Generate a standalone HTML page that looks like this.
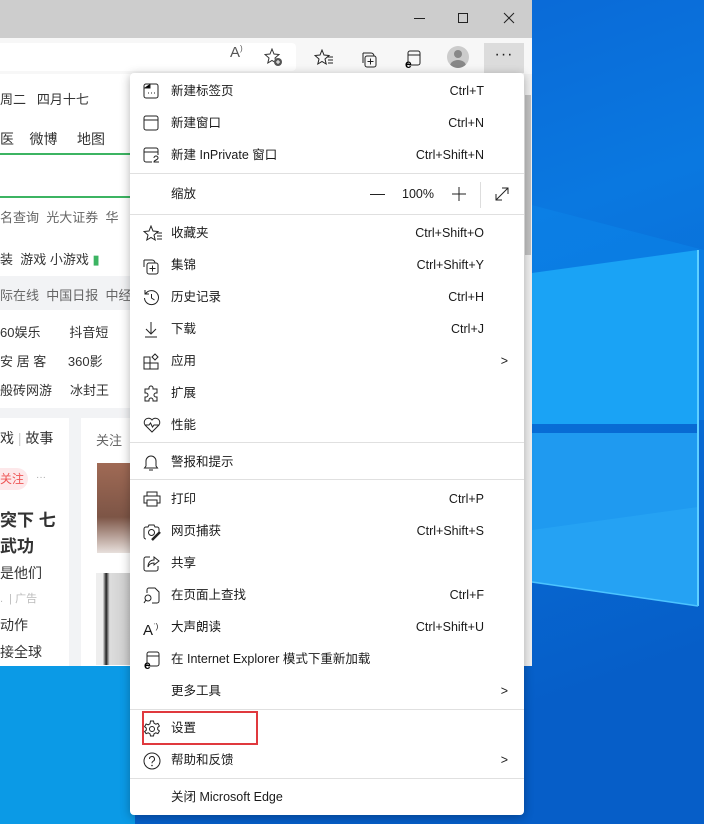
<!DOCTYPE html>
<html><head><meta charset="utf-8"><style>
*{margin:0;padding:0;box-sizing:border-box}
body{width:704px;height:824px;overflow:hidden;position:relative;font-family:"Liberation Sans","Noto Sans CJK SC",sans-serif;font-size:13px;color:#1a1a1a;background:#0a6fd6}
.abs{position:absolute}
.menu{left:130px;top:73px;width:394px;height:742px;background:#fff;border-radius:4px;box-shadow:0 2px 10px rgba(0,0,0,.3)}
.it{position:absolute;left:0;width:394px;height:32px;line-height:32px}
.it .t{position:absolute;left:41px;font-size:12.5px}
.it .k{position:absolute;right:40px;font-size:12.5px}
.it svg{position:absolute;left:13px;top:8px}
.div{position:absolute;left:0;width:394px;height:1px;background:#e0e0e0}
.pg{font-size:13px;color:#333;position:absolute}
</style></head><body>
<!-- desktop -->
<svg class="abs" style="left:0;top:0" width="704" height="824">
<defs>
<linearGradient id="bg" x1="0" y1="0" x2="0.3" y2="1"><stop offset="0" stop-color="#0a5fd0"/><stop offset="0.45" stop-color="#0a78e0"/><stop offset="1" stop-color="#065ec8"/></linearGradient>
</defs>
<rect width="704" height="824" fill="url(#bg)"/>
<polygon points="532,205 704,250 704,420 532,420" fill="#0c86ea" opacity=".5"/>
<polygon points="532,273 698,250 698,424 532,424" fill="#1aa3f5"/>
<polygon points="532,433 698,433 698,606 532,582" fill="#1f9af0"/>
<polygon points="532,530 698,507 698,606 532,582" fill="#2aa8f5" opacity=".6"/>
<line x1="698" y1="250" x2="698" y2="606" stroke="#5fd0ff" stroke-width="2"/>
<line x1="532" y1="582" x2="698" y2="606" stroke="#4cc4ff" stroke-width="1.5"/>
<rect x="0" y="666" width="135" height="158" fill="#0b9ae6"/>
</svg>
<!-- browser -->
<div class="abs" style="left:0;top:0;width:532px;height:666px;background:#fff"></div>
<div class="abs" style="left:0;top:0;width:532px;height:38px;background:#cdcdcd"></div>
<div class="abs" style="left:414px;top:18px;width:11px;height:1px;background:#222"></div>
<div class="abs" style="left:458px;top:13px;width:10px;height:10px;border:1px solid #222"></div>
<svg class="abs" style="left:503px;top:12px" width="12" height="12"><path d="M1 1L11 11M11 1L1 11" stroke="#222" stroke-width="1"/></svg>
<div class="abs" style="left:0;top:38px;width:532px;height:36px;background:#f7f7f7"></div>
<div class="abs" style="left:0;top:43px;width:296px;height:28px;background:#fff;border-radius:0 4px 4px 0"></div>
<div class="abs" style="left:230px;top:44px;font-size:15px;color:#555">A<sup style="font-size:8px">)</sup></div>
<svg class="abs" style="left:264px;top:48px" width="20" height="20"><path d="M8 1l2 5 5 .5-4 3.5 1.2 5L8 12.5 3.8 15 5 10 1 6.5 6 6z" fill="none" stroke="#333"/><circle cx="14" cy="14" r="4" fill="#555"/><path d="M12 14h4M14 12v4" stroke="#fff"/></svg>
<svg class="abs" style="left:314px;top:49px" width="20" height="18"><path d="M8 1l2 5 5 .5-4 3.5 1.2 5L8 12.5 3.8 15 5 10 1 6.5 6 6z" fill="none" stroke="#222"/><path d="M13 8h6M14 11h5M14 14h5" stroke="#222"/></svg>
<svg class="abs" style="left:359px;top:49px" width="20" height="20"><path d="M4 4h8a3 3 0 0 1 3 3" fill="none" stroke="#222"/><rect x="6" y="7" width="11" height="11" rx="2" fill="none" stroke="#222"/><path d="M11.5 9.5v6M8.5 12.5h6" stroke="#222"/><path d="M4 4v10" stroke="#222"/></svg>
<svg class="abs" style="left:403px;top:49px" width="20" height="20"><rect x="5" y="2" width="12" height="14" rx="2" fill="none" stroke="#222"/><path d="M5 6h12" stroke="#222"/><text x="2" y="19" font-size="12" font-weight="bold" font-family="Liberation Sans">e</text></svg>
<div class="abs" style="left:447px;top:46px;width:22px;height:22px;border-radius:50%;background:#ccc;overflow:hidden"><div class="abs" style="left:7px;top:4px;width:8px;height:8px;border-radius:50%;background:#888"></div><div class="abs" style="left:3px;top:14px;width:16px;height:12px;border-radius:50%;background:#888"></div></div>
<div class="abs" style="left:484px;top:43px;width:40px;height:30px;background:#dcdcdc;text-align:center;line-height:24px;font-size:16px;letter-spacing:1px">···</div>
<!-- page bits -->
<div class="pg" style="left:0;top:89px">周二 &nbsp; 四月十七</div>
<div class="pg" style="left:0;top:129px;font-size:14px">医 &nbsp; &nbsp;微博 &nbsp; &nbsp; 地图</div>
<div class="abs" style="left:0;top:153px;width:130px;height:2px;background:#3cb462"></div>
<div class="abs" style="left:0;top:196px;width:130px;height:2px;background:#3cb462"></div>
<div class="pg" style="left:0;top:207px;color:#666">名查询 &nbsp;光大证券 &nbsp;华</div>
<div class="pg" style="left:0;top:249px">装 &nbsp;游戏 小游戏 <span style="color:#3cb462">▮</span></div>
<div class="abs" style="left:0;top:276px;width:130px;height:34px;background:#f2f3f5"></div>
<div class="pg" style="left:0;top:285px;color:#666">际在线 &nbsp;中国日报 &nbsp;中经</div>
<div class="pg" style="left:0;top:322px">60娱乐 &nbsp; &nbsp; &nbsp; &nbsp;抖音短</div>
<div class="pg" style="left:0;top:351px">安 居 客 &nbsp; &nbsp; &nbsp;360影</div>
<div class="pg" style="left:0;top:380px">般砖网游 &nbsp; &nbsp; 冰封王</div>
<div class="abs" style="left:0;top:408px;width:130px;height:10px;background:#f2f3f5"></div>
<div class="abs" style="left:69px;top:418px;width:12px;height:248px;background:#f2f3f5"></div>
<div class="pg" style="left:0;top:428px;font-size:14px">戏 <span style="color:#ccc">|</span> 故事</div>
<div class="pg" style="left:96px;top:430px;color:#666">关注</div>
<div class="abs" style="left:0;top:468px;width:28px;height:22px;background:#fde8ea;border-radius:0 11px 11px 0;color:#e55;font-size:12px;line-height:22px">关注</div>
<div class="pg" style="left:36px;top:472px;color:#aaa;font-size:10px">···</div>
<div class="pg" style="left:0;top:506px;font-size:17px;font-weight:bold">突下 七</div>
<div class="pg" style="left:0;top:532px;font-size:17px;font-weight:bold">武功</div>
<div class="pg" style="left:0;top:563px;font-size:14px">是他们</div>
<div class="pg" style="left:0;top:590px;font-size:11px;color:#bbb">. &nbsp;| 广告</div>
<div class="pg" style="left:0;top:615px;font-size:14px">动作</div>
<div class="pg" style="left:0;top:642px;font-size:14px">接全球</div>
<div class="abs" style="left:97px;top:463px;width:33px;height:90px;background:linear-gradient(#a06a55,#7d5546 60%,#e8e0dc)"></div>
<div class="abs" style="left:96px;top:573px;width:34px;height:92px;background:linear-gradient(90deg,#eee 20%,#222 30%,#ddd 40%,#ccc)"></div>
<div class="abs" style="left:524px;top:74px;width:8px;height:592px;background:#f0f0f0"></div>
<div class="abs" style="left:525px;top:95px;width:6px;height:160px;background:#c2c2c2"></div>
<!-- menu -->
<div class="abs menu">
<div class="it" style="top:2px"><svg width="16" height="16"><rect x="1" y="1" width="14" height="14" rx="2" fill="none" stroke="#222"/><path d="M1 5h6V1M5 10h1M8 10h1M11 10h1" stroke="#222"/></svg><span class="t">新建标签页</span><span class="k">Ctrl+T</span></div>
<div class="it" style="top:34px"><svg width="16" height="16"><rect x="1" y="1" width="14" height="14" rx="2" fill="none" stroke="#222"/><path d="M1 5h14" stroke="#222"/></svg><span class="t">新建窗口</span><span class="k">Ctrl+N</span></div>
<div class="it" style="top:66px"><svg width="18" height="18"><path d="M9 15H3a2 2 0 0 1-2-2V3a2 2 0 0 1 2-2h10a2 2 0 0 1 2 2v5M1 5h14" fill="none" stroke="#222"/><path d="M11 11a2 2 0 1 1 4 0c0 2-4 2-4 4h5" fill="none" stroke="#222"/></svg><span class="t">新建 InPrivate 窗口</span><span class="k">Ctrl+Shift+N</span></div>
<div class="div" style="top:100px"></div>
<div class="it" style="top:105px"><span class="t">缩放</span>
<div class="abs" style="left:240px;top:16px;width:15px;height:1px;background:#222"></div>
<span class="abs" style="left:272px;font-size:12.5px">100%</span>
<svg width="16" height="16" style="left:321px;top:8px"><path d="M8 1v14M1 8h14" stroke="#222"/></svg>
<div class="abs" style="left:350px;top:4px;width:1px;height:26px;background:#ddd"></div>
<svg width="16" height="16" style="left:364px;top:8px"><path d="M2 14L14 2M8 2h6v6M2 8v6h6" fill="none" stroke="#222"/></svg></div>
<div class="div" style="top:141px"></div>
<div class="it" style="top:144px"><svg width="20" height="18"><path d="M8 1l2 5 5 .5-4 3.5 1.2 5L8 12.5 3.8 15 5 10 1 6.5 6 6z" fill="none" stroke="#222"/><path d="M13 8h6M14 11h5M14 14h5" stroke="#222"/></svg><span class="t">收藏夹</span><span class="k">Ctrl+Shift+O</span></div>
<div class="it" style="top:176px"><svg width="18" height="18"><path d="M1 3h8a3 3 0 0 1 3 3" fill="none" stroke="#222"/><path d="M1 3v7" stroke="#222"/><rect x="4" y="6" width="11" height="11" rx="2" fill="none" stroke="#222"/><path d="M9.5 8.5v6M6.5 11.5h6" stroke="#222"/></svg><span class="t">集锦</span><span class="k">Ctrl+Shift+Y</span></div>
<div class="it" style="top:208px"><svg width="18" height="18"><path d="M2.5 5A7 7 0 1 1 1.5 9" fill="none" stroke="#222"/><path d="M2 1v4h4M8.5 5v4l3 2" fill="none" stroke="#222"/></svg><span class="t">历史记录</span><span class="k">Ctrl+H</span></div>
<div class="it" style="top:240px"><svg width="16" height="18"><path d="M8 1v12M3 8l5 5 5-5M2 16h12" fill="none" stroke="#222"/></svg><span class="t">下载</span><span class="k">Ctrl+J</span></div>
<div class="it" style="top:272px"><svg width="18" height="18"><path d="M1 4h6v12H1zM7 10h8v6H7zM1 10h6" fill="none" stroke="#222"/><path d="M12 1l3 3-3 3-3-3z" fill="none" stroke="#222"/></svg><span class="t">应用</span><span class="k" style="right:16px">&gt;</span></div>
<div class="it" style="top:304px"><svg width="18" height="18"><path d="M6 3a2 2 0 0 1 4 0v1h4v4h-1a2 2 0 0 0 0 4h1v4H10v-1a2 2 0 0 0-4 0v1H2v-4h1a2 2 0 0 0 0-4H2V4h4z" fill="none" stroke="#222"/></svg><span class="t">扩展</span></div>
<div class="it" style="top:336px"><svg width="18" height="16"><path d="M9 15L2 8a4 4 0 0 1 7-5 4 4 0 0 1 7 5z" fill="none" stroke="#222"/><path d="M2 8h4l1.5-2 2 4 1.5-2h5" fill="none" stroke="#222"/></svg><span class="t">性能</span></div>
<div class="div" style="top:369px"></div>
<div class="it" style="top:373px"><svg width="16" height="18"><path d="M3 12V7a5 5 0 0 1 10 0v5l1.5 2h-13zM6 16h4" fill="none" stroke="#222"/></svg><span class="t">警报和提示</span></div>
<div class="div" style="top:406px"></div>
<div class="it" style="top:410px"><svg width="18" height="16"><path d="M4 5V1h10v4M4 12H1V5h16v7h-3M4 9h10v6H4z" fill="none" stroke="#222"/></svg><span class="t">打印</span><span class="k">Ctrl+P</span></div>
<div class="it" style="top:442px"><svg width="18" height="18"><path d="M3 16a2 2 0 0 1-2-2V6a2 2 0 0 1 2-2h2l1-2h5l1 2h2a2 2 0 0 1 2 2v3" fill="none" stroke="#222"/><circle cx="8.5" cy="9.5" r="3" fill="none" stroke="#222"/><path d="M9 17l8-8" stroke="#222" stroke-width="2.5"/></svg><span class="t">网页捕获</span><span class="k">Ctrl+Shift+S</span></div>
<div class="it" style="top:474px"><svg width="18" height="18"><path d="M7 2H3a2 2 0 0 0-2 2v10a2 2 0 0 0 2 2h10a2 2 0 0 0 2-2v-3" fill="none" stroke="#222"/><path d="M11 2l5 4-5 4V8c-3 0-5 1-6 4 0-4 2-7 6-7z" fill="none" stroke="#222"/></svg><span class="t">共享</span></div>
<div class="it" style="top:506px"><svg width="18" height="18"><path d="M4 6V3a2 2 0 0 1 2-2h6l4 4v9a2 2 0 0 1-2 2H9" fill="none" stroke="#222"/><circle cx="5" cy="11" r="3" fill="none" stroke="#222"/><path d="M2.8 13.2L1 16" stroke="#222"/></svg><span class="t">在页面上查找</span><span class="k">Ctrl+F</span></div>
<div class="it" style="top:538px"><span class="abs" style="left:13px;font-size:15px">A<sup style="font-size:8px">ʾ)</sup></span><span class="t">大声朗读</span><span class="k">Ctrl+Shift+U</span></div>
<div class="it" style="top:570px"><svg width="18" height="18"><rect x="4" y="1" width="12" height="14" rx="2" fill="none" stroke="#222"/><path d="M4 5h12" stroke="#222"/><text x="1" y="18" font-size="12" font-weight="bold" font-family="Liberation Sans">e</text></svg><span class="t">在 Internet Explorer 模式下重新加载</span></div>
<div class="it" style="top:602px"><span class="t">更多工具</span><span class="k" style="right:16px">&gt;</span></div>
<div class="div" style="top:636px"></div>
<div class="it" style="top:639px"><svg width="18" height="18"><circle cx="9" cy="9" r="2.5" fill="none" stroke="#222"/><path d="M7.5 1h3l.5 2.2 1.8 1 2.1-.8 1.5 2.6-1.7 1.5v2l1.7 1.5-1.5 2.6-2.1-.8-1.8 1-.5 2.2h-3l-.5-2.2-1.8-1-2.1.8L1.6 11.6 3.3 10.1v-2L1.6 6.6 3.1 4l2.1.8 1.8-1z" fill="none" stroke="#222"/></svg><span class="t">设置</span></div>
<div class="abs" style="left:12px;top:638px;width:116px;height:34px;border:2px solid #e0393e"></div>
<div class="it" style="top:671px"><svg width="18" height="18"><circle cx="9" cy="9" r="8" fill="none" stroke="#222"/><path d="M6.5 7a2.5 2.5 0 1 1 3.5 2.3c-1 .5-1 1-1 2" fill="none" stroke="#222"/><circle cx="9" cy="13.5" r=".8" fill="#222"/></svg><span class="t">帮助和反馈</span><span class="k" style="right:16px">&gt;</span></div>
<div class="div" style="top:705px"></div>
<div class="it" style="top:708px"><span class="t">关闭 Microsoft Edge</span></div>
</div>
</body></html>
